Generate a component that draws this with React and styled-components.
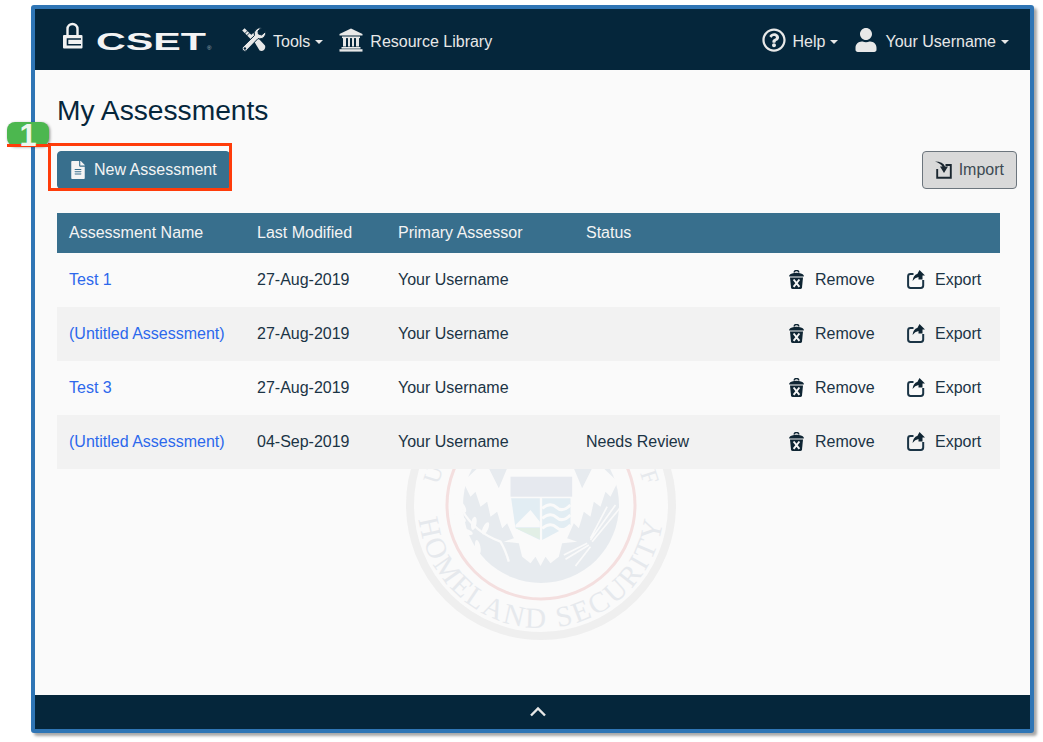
import React from "react";
import styled, { createGlobalStyle } from "styled-components";
import { FaFileAlt, FaRegQuestionCircle, FaUser } from "react-icons/fa";

const GlobalStyle = createGlobalStyle`
  html, body {
    margin: 0;
    padding: 0;
    background: #fff;
    font-family: "Liberation Sans", Arial, sans-serif;
    font-size: 16px;
    color: #05263b;
  }
`;

const Page = styled.div`
  width: 1043px;
  height: 742px;
  padding: 5px 9px 9px 31px;
  box-sizing: border-box;
  overflow: hidden;
  position: relative;
`;

const Frame = styled.div`
  height: 100%;
  border: 4px solid #2f75b5;
  border-radius: 3px;
  box-shadow: 3px 3px 3px rgba(0, 0, 0, 0.35);
  display: flex;
  flex-direction: column;
  background: #fafafa;
  box-sizing: border-box;
`;

const TopBar = styled.header`
  height: 61px;
  flex: none;
  background: #05263b;
  color: #e8e8e8;
  display: flex;
  align-items: center;
  justify-content: space-between;
  padding: 0 21px 0 27px;
`;

const NavGroup = styled.div`
  display: flex;
  align-items: center;
`;

const Logo = styled.div`
  display: flex;
  align-items: center;
  width: 179px;
`;

const NavItem = styled.div`
  display: flex;
  align-items: center;
  gap: 7px;
  margin-left: ${(p) => p.$left || 0}px;
  font-size: 16px;
`;

const NavLabel = styled.span`
  padding-top: 4px;
`;

const Caret = styled.span`
  width: 0;
  height: 0;
  margin: 4px 0 0 -2px;
  border-left: 4.5px solid transparent;
  border-right: 4.5px solid transparent;
  border-top: 4.5px solid #e8e8e8;
`;

const Main = styled.main`
  flex: 1;
  position: relative;
  padding: 22px 31px 0 22px;
  overflow: hidden;
`;

const Seal = styled.svg`
  position: absolute;
  left: 369.5px;
  top: 299px;
  width: 272px;
  height: 272px;
`;

const Title = styled.h1`
  position: relative;
  margin: 0 0 23px;
  font-size: 28.2px;
  font-weight: 400;
  line-height: 36px;
`;

const Toolbar = styled.div`
  position: relative;
  display: flex;
  justify-content: space-between;
  align-items: flex-start;
  margin-bottom: 24px;
  margin-right: -18px;
`;

const Button = styled.button`
  height: 38px;
  display: flex;
  align-items: center;
  box-sizing: border-box;
  font-family: inherit;
  font-size: 16px;
  border-radius: 4px;
  padding: ${(p) => (p.$primary ? "0 12px 0 11px" : "0 12px")};
  gap: 7px;
  background: ${(p) => (p.$primary ? "#386f8d" : "#d9d9d9")};
  color: ${(p) => (p.$primary ? "#f4f4f4" : "#3d4a52")};
  border: 1px solid ${(p) => (p.$primary ? "#386f8d" : "#6c757d")};
`;

const Table = styled.div`
  position: relative;
  width: 943px;
`;

const Row = styled.div`
  display: grid;
  grid-template-columns: 200px 141px 188px 203px 118px 93px;
  align-items: center;
  height: ${(p) => (p.$head ? 40 : 54)}px;
  background: ${(p) => (p.$head ? "#386f8d" : p.$shaded ? "#f2f2f2" : "#fafafa")};
  color: ${(p) => (p.$head ? "#f4f4f4" : "#1b3445")};
`;

const Cell = styled.div`
  padding-left: ${(p) => (p.$first ? 12 : 0)}px;
`;

const NameLink = styled.a`
  color: #2c68ec;
  text-decoration: none;
`;

const Action = styled.div`
  display: flex;
  align-items: center;
  gap: ${(p) => p.$gap}px;

  svg {
    margin-top: -2px;
  }
`;

const Footer = styled.footer`
  height: 34px;
  flex: none;
  background: #05263b;
  display: flex;
  align-items: center;
  justify-content: center;
  padding: 0 0 2px 10px;
  box-sizing: border-box;
`;

const Callout = styled.div`
  position: absolute;
  left: 48px;
  top: 143px;
  width: 184px;
  height: 48px;
  border: 3px solid #ff3c0a;
  box-sizing: border-box;
`;

const Badge = styled.div`
  position: absolute;
  left: 7px;
  top: 122px;
  width: 42px;
  height: 24px;
  border-radius: 8px;
  background: #4cb74f;
  box-shadow: 1px 1px 3px rgba(0, 0, 0, 0.45);
`;

const BadgeLine = styled.div`
  position: absolute;
  left: 0;
  top: 22px;
  width: 42px;
  height: 3px;
  background: #ff3c0a;
`;

const BadgeNumber = styled.div`
  position: absolute;
  left: 0;
  right: 0;
  top: 2px;
  color: #eef6ee;
  font-size: 31px;
  font-weight: 700;
  line-height: 24px;
  text-align: center;
`;

const rows = [
  { name: "Test 1", date: "27-Aug-2019", status: "" },
  { name: "(Untitled Assessment)", date: "27-Aug-2019", status: "" },
  { name: "Test 3", date: "27-Aug-2019", status: "" },
  { name: "(Untitled Assessment)", date: "04-Sep-2019", status: "Needs Review" },
];

const LockLogo = () => (
  <svg width="155" height="36" viewBox="0 0 155 36">
    <path d="M5.5 13 V7 a5 5 0 0 1 10 0 V13" fill="none" stroke="#f2f2f2" strokeWidth="2.4" />
    <rect x="1" y="13" width="19.5" height="13.5" rx="1" fill="#f2f2f2" />
    <path d="M19 17 H5.5 V22.8 H19" fill="none" stroke="#05263b" strokeWidth="1.6" />
    <text x="34" y="27.5" fontFamily="Liberation Sans" fontWeight="700" fontSize="24" fill="#f4f4f4" textLength="110" lengthAdjust="spacingAndGlyphs">CSET</text>
    <text x="145" y="27.5" fontFamily="Liberation Sans" fontSize="6" fill="#a8b4bc">®</text>
  </svg>
);

const ToolsIcon = () => (
  <svg width="25" height="25" viewBox="0 0 25 25">
    <path d="M1.2 3.6 L3.6 1.2 L12 9.6 L9.6 12 Z" fill="#e8e8e8" />
    <path d="M3.4 7 L7 3.4 M5.4 9 L9 5.4" stroke="#05263b" strokeWidth="0.9" />
    <path d="M9.6 8.4 L12.4 6 L24 18.5 Q24.8 21 23 23 Q21 24.6 18.6 23.6 Z" fill="#e8e8e8" />
    <path d="M20.5 1 A6 6 0 0 0 13.4 8.6 L1.6 20.2 Q.4 22 2 23.6 Q3.8 25 5.6 23.4 L17 11.6 A6 6 0 0 0 24.6 4.6 L20.6 8 L17.4 7 L17 4 Z" fill="#e8e8e8" stroke="#05263b" strokeWidth="1" />
    <circle cx="3.9" cy="21.5" r="1.2" fill="#05263b" />
  </svg>
);

const BankIcon = () => (
  <svg width="24" height="24" viewBox="0 0 24 24">
    <path d="M12 .5 L23.5 6 V7.5 H.5 V6 Z" fill="#e8e8e8" />
    <rect x="3" y="8.5" width="18" height="1.6" fill="#e8e8e8" />
    <path d="M4 10 H7 V18.5 H4 Z M9 10 H11 V18.5 H9 Z M13 10 H15 V18.5 H13 Z M17 10 H20 V18.5 H17 Z" fill="#e8e8e8" />
    <rect x="2.5" y="19" width="19" height="1.6" fill="#e8e8e8" />
    <rect x="0.5" y="21.2" width="23" height="2.4" fill="#e8e8e8" />
  </svg>
);

const TrashIcon = () => (
  <svg width="15" height="19" viewBox="0 0 15 19">
    <path d="M5.2 2.6 a2.3 2.1 0 0 1 4.6 0" fill="none" stroke="#0f2533" strokeWidth="1.5" />
    <path d="M.2 5.4 C2 2 13 2 14.8 5.4 L14.8 6.6 H.2 Z" fill="#0f2533" />
    <path d="M1 7.4 H14 L13 17.4 Q12.8 19 11.2 19 H3.8 Q2.2 19 2 17.4 Z" fill="#0f2533" />
    <path d="M4.6 9.5 L10.4 16.8 M10.4 9.5 L4.6 16.8" stroke="#f6f6f6" strokeWidth="2" />
  </svg>
);

const ExportIcon = () => (
  <svg width="18" height="19" viewBox="0 0 18 19">
    <path d="M6.5 4 H3.5 Q1.1 4 1.1 6.4 V15.6 Q1.1 18 3.5 18 H13.8 Q16.2 18 16.2 15.6 V10" fill="none" stroke="#1b3445" strokeWidth="2" />
    <path d="M12.5 0 L18 5.5 H15.5 V9.5 H11.5 V7 Q8 7.5 5.5 11 Q6 5.5 10.5 3.8 Z" fill="#0f2533" />
  </svg>
);

const ImportIcon = () => (
  <svg width="17" height="18" viewBox="0 0 17 18">
    <path d="M10.5 4 H15.8 V16.8 H2.2 V8" fill="none" stroke="#1b2730" strokeWidth="1.9" />
    <path d="M0 .5 Q8 .5 10 5.5 L13 5.5 L9 12 L5 5.5 L7.5 5.5 Q5.5 2.5 0 .5 Z" fill="#1b2730" />
  </svg>
);

// left half of the eagle, in the same numbers as the right half mirrored about x=450
const eagleLeft = [
  [350, -60], [218, 65], [240, 110], [255, 95], [270, 140], [290, 125], [300, 170], [320, 155],
  [335, 205], [350, 190], [370, 235], [340, 245], [385, 250], [395, 290], [420, 310], [435, 290], [450, 318],
];
const eaglePoints = [...eagleLeft, ...eagleLeft.slice(0, -1).reverse().map(([x, y]) => [900 - x, y])]
  .map((p) => p.join(","))
  .join(" ");

const SealMark = () => (
  <Seal viewBox="0 0 272 272">
    <defs>
      <path id="sealBottom" d="M13 136 a123 123 0 0 0 246 0" />
    </defs>
    <circle cx="136" cy="136" r="131" fill="none" stroke="#efefef" strokeWidth="8" />
    <circle cx="136" cy="136" r="94" fill="none" stroke="#f4dfdf" strokeWidth="3" />
    <circle cx="136" cy="136" r="78" fill="#e7ebef" />
    <text fontFamily="Liberation Serif" fontSize="29" fill="#e6e9ed" letterSpacing="2.5">
      <textPath href="#sealBottom" startOffset="50%" textAnchor="middle">HOMELAND SECURITY</textPath>
    </text>
    <text x="33" y="116" transform="rotate(-72 33 116)" fontFamily="Liberation Serif" fontSize="24" fill="#e6e9ed">U</text>
    <text x="235" y="104" transform="rotate(72 235 104)" fontFamily="Liberation Serif" fontSize="24" fill="#e6e9ed">F</text>
    <g transform="translate(-14.5 91) scale(0.3333)">
      <polygon points={eaglePoints} fill="#fafafa" />
      <path d="M295 25 L350 25 L325 85 Z M605 25 L550 25 L575 85 Z" fill="#e7ebef" />
      <rect x="360" y="50" width="185" height="60" fill="#e6e9ef" />
      <path d="M362 115 H448 V240 L375 205 Z" fill="#e2edf3" />
      <path d="M455 115 H540 V195 L455 240 Z" fill="#e2edf3" />
      <path d="M375 195 L420 150 L448 185 V202 H375 Z" fill="#fafafa" />
      <path d="M375 204 H448 V238 Z" fill="#e2efe6" />
      <path d="M455 145 Q480 125 498 142 T540 135 M455 175 Q480 155 498 172 T540 165 M455 205 Q480 185 498 202 T540 195" fill="none" stroke="#fafafa" strokeWidth="9" />
      <g fill="#fafafa">
        <ellipse cx="215" cy="140" rx="8" ry="20" transform="rotate(-30 215 140)" />
        <ellipse cx="208" cy="175" rx="8" ry="20" transform="rotate(-65 208 175)" />
        <ellipse cx="250" cy="190" rx="8" ry="20" transform="rotate(10 250 190)" />
        <ellipse cx="228" cy="215" rx="8" ry="20" transform="rotate(-70 228 215)" />
        <ellipse cx="285" cy="205" rx="8" ry="20" transform="rotate(25 285 205)" />
        <ellipse cx="262" cy="262" rx="8" ry="22" transform="rotate(-10 262 262)" />
      </g>
      <path d="M215 150 Q250 215 330 245 Q345 270 355 305" fill="none" stroke="#fafafa" strokeWidth="7" />
      <path d="M600 235 L650 140 M600 240 L675 135 M605 245 L700 130 M590 250 L520 285 M595 255 L525 298 M600 260 L555 318" fill="none" stroke="#fafafa" strokeWidth="5" />
    </g>
  </Seal>
);

export default function App() {
  return (
    <Page>
      <GlobalStyle />
      <Frame>
        <TopBar>
          <NavGroup>
            <Logo>
              <LockLogo />
            </Logo>
            <NavItem>
              <ToolsIcon />
              <NavLabel>Tools</NavLabel>
              <Caret />
            </NavItem>
            <NavItem $left={16}>
              <BankIcon />
              <NavLabel>Resource Library</NavLabel>
            </NavItem>
          </NavGroup>
          <NavGroup>
            <NavItem>
              <FaRegQuestionCircle size={24} />
              <NavLabel>Help</NavLabel>
              <Caret />
            </NavItem>
            <NavItem $left={16}>
              <FaUser size={24} />
              <NavLabel>Your Username</NavLabel>
              <Caret />
            </NavItem>
          </NavGroup>
        </TopBar>
        <Main>
          <SealMark />
          <Title>My Assessments</Title>
          <Toolbar>
            <Button $primary>
              <FaFileAlt size={18} />
              New Assessment
            </Button>
            <Button>
              <ImportIcon />
              Import
            </Button>
          </Toolbar>
          <Table>
            <Row $head>
              <Cell $first>Assessment Name</Cell>
              <Cell>Last Modified</Cell>
              <Cell>Primary Assessor</Cell>
              <Cell>Status</Cell>
            </Row>
            {rows.map((row, i) => (
              <Row key={i} $shaded={i % 2 === 1}>
                <Cell $first>
                  <NameLink href="#">{row.name}</NameLink>
                </Cell>
                <Cell>{row.date}</Cell>
                <Cell>Your Username</Cell>
                <Cell>{row.status}</Cell>
                <Action $gap={11}>
                  <TrashIcon />
                  Remove
                </Action>
                <Action $gap={10}>
                  <ExportIcon />
                  Export
                </Action>
              </Row>
            ))}
          </Table>
        </Main>
        <Footer>
          <svg width="18" height="11" viewBox="0 0 18 11">
            <path d="M2 9.5 L9 2.5 L16 9.5" fill="none" stroke="#e8e8e8" strokeWidth="2.4" />
          </svg>
        </Footer>
      </Frame>
      <Callout />
      <Badge>
        <BadgeLine />
        <BadgeNumber>1</BadgeNumber>
      </Badge>
    </Page>
  );
}
